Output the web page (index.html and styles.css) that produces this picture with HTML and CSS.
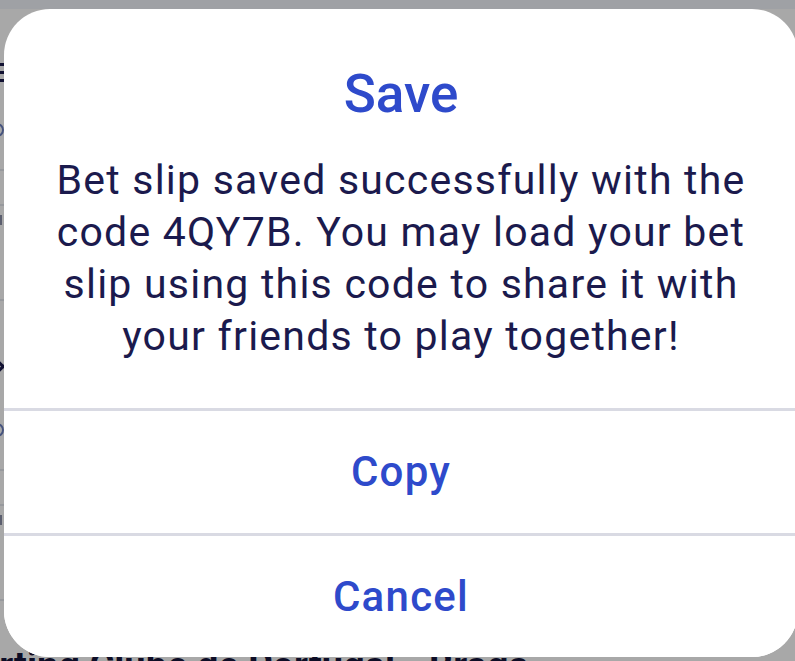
FILE: index.html
```html
<!DOCTYPE html>
<html lang="en">
<head>
<meta charset="utf-8">
<title>Save</title>
<link rel="stylesheet" href="styles.css">
</head>
<body>
<div class="page">
  <div class="statusbar"></div>
  <div class="list">
    <div class="row row-head"><span class="menu-mark"></span></div>
    <div class="row row-event"><span class="ring-mark"></span><span class="bar-mark"></span><span class="arrow-mark"></span></div>
    <div class="row row-event short"><span class="ring-mark"></span><span class="bar-mark"></span></div>
  </div>
  <div class="match">Sporting Clube de Portugal - Braga</div>
</div>
<div class="overlay"></div>
<div class="dialog" role="dialog" aria-labelledby="dlg-title">
  <div class="dialog-content">
    <h1 class="dialog-title" id="dlg-title">Save</h1>
    <p class="dialog-text">Bet slip saved successfully with the code 4QY7B. You may load your bet slip using this code to share it with your friends to play together!</p>
  </div>
  <button class="dialog-btn" type="button">Copy</button>
  <button class="dialog-btn" type="button">Cancel</button>
</div>
</body>
</html>
```
FILE: styles.css
```css
html, body {
  margin: 0;
  padding: 0;
  width: 795px;
  height: 661px;
  overflow: hidden;
}
body {
  font-family: Roboto, "Noto Sans", "Liberation Sans", sans-serif;
  background: #ffffff;
  position: relative;
}
.page {
  height: 661px;
  display: flex;
  flex-direction: column;
  background: #ffffff;
}
.statusbar {
  height: 9px;
  background: #f1f4fb;
  flex: none;
}
.list {
  display: flex;
  flex-direction: column;
  flex: none;
}
.row {
  position: relative;
  height: 100px;
}
.row-event {
  height: 300px;
  background: linear-gradient(#ffffff 0 60px, #e6e8ef 60px 62px, #ffffff 62px 95px, #e6e8ef 95px 97px, #ffffff 97px 190px, #e6e8ef 190px 192px, #ffffff 192px);
}
.row-event.short {
  height: 200px;
}
.menu-mark {
  position: absolute;
  left: -6px;
  top: 54px;
  width: 10px;
  height: 20px;
  background: linear-gradient(#1b1a4d 0 3px, transparent 3px 8px, #1b1a4d 8px 11px, transparent 11px 16px, #1b1a4d 16px 19px, transparent 19px);
}
.ring-mark {
  position: absolute;
  left: -10px;
  top: 14px;
  width: 10px;
  height: 10px;
  border: 2px solid #6b7fbf;
  border-radius: 50%;
}
.bar-mark {
  position: absolute;
  left: -4px;
  top: 106px;
  width: 6px;
  height: 10px;
  background: #8a8fa8;
}
.arrow-mark {
  position: absolute;
  left: -8px;
  top: 252px;
  width: 8px;
  height: 8px;
  border-top: 3px solid #1b1a4d;
  border-right: 3px solid #1b1a4d;
  transform: rotate(45deg);
}
.match {
  margin-left: -67px;
  margin-top: 37px;
  font-size: 38px;
  line-height: 40px;
  font-weight: 700;
  color: #14143a;
  white-space: nowrap;
}
.overlay {
  position: absolute;
  inset: 0;
  background: rgba(0, 0, 0, 0.34);
}
.dialog {
  position: absolute;
  left: 4px;
  top: 9px;
  width: 794px;
  height: 648px;
  background: #ffffff;
  border-radius: 46px;
  display: flex;
  flex-direction: column;
  overflow: hidden;
}
.dialog-content {
  height: 399px;
  flex: none;
  padding: 0 30px;
  box-sizing: border-box;
  text-align: center;
}
.dialog-title {
  margin: 0;
  padding-top: 55px;
  font-size: 53px;
  line-height: 60px;
  font-weight: 500;
  color: #2e4acb;
}
.dialog-text {
  margin: 30px 0 0;
  font-size: 41px;
  line-height: 52px;
  letter-spacing: 0.03em;
  font-weight: 400;
  color: #1b1a4d;
}
.dialog-btn {
  flex: 1;
  border: 0;
  border-top: 3px solid #d9dae3;
  background: #ffffff;
  margin: 0;
  padding: 0;
  font-family: inherit;
  font-size: 42px;
  letter-spacing: 0.03em;
  font-weight: 500;
  color: #2e4acb;
  text-align: center;
}
```
